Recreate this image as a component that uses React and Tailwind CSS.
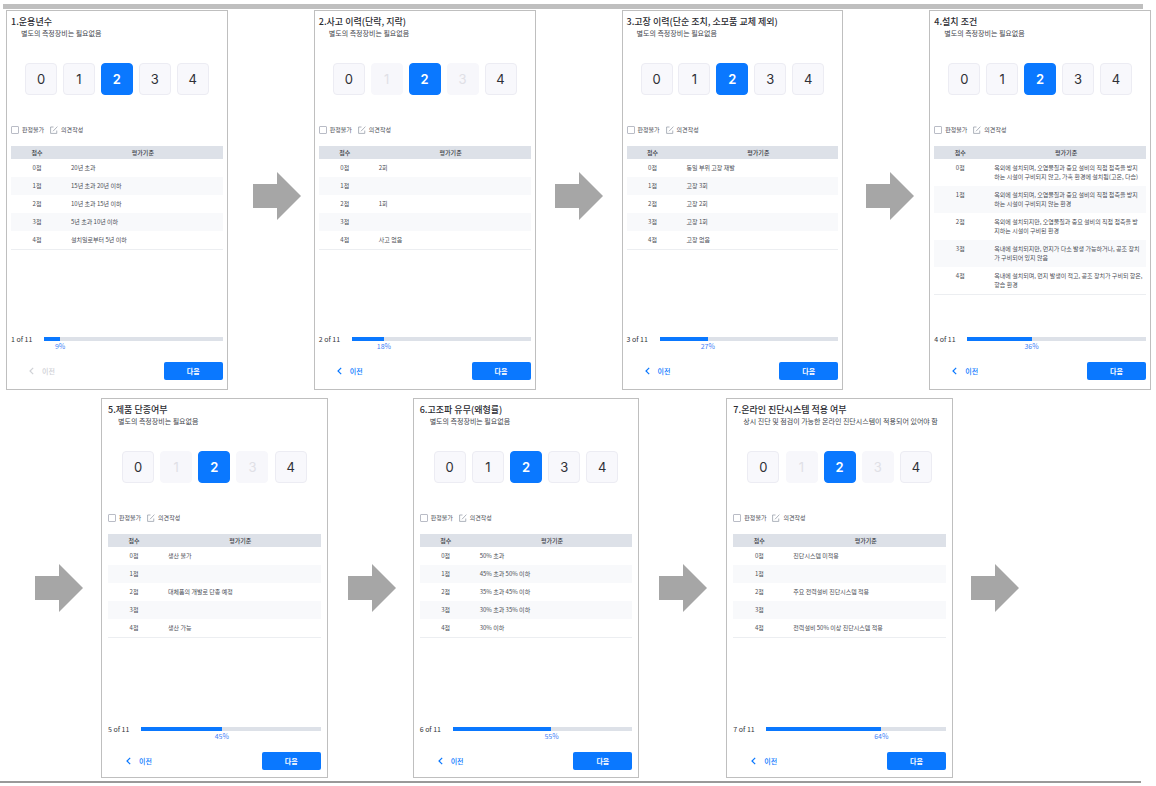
import clsx from "clsx";

const TOTAL = 11;
const NO_TOOL = "별도의 측정장비는 필요없음";

const firstRow = [
  {
    id: 1,
    title: "운용년수",
    note: NO_TOOL,
    criteria: ["20년 초과", "15년 초과 20년 이하", "10년 초과 15년 이하", "5년 초과 10년 이하", "설치일로부터 5년 이하"],
  },
  {
    id: 2,
    title: "사고 이력(단락, 지락)",
    note: NO_TOOL,
    criteria: ["2회", "", "1회", "", "사고 없음"],
  },
  {
    id: 3,
    title: "고장 이력(단순 조치, 소모품 교체 제외)",
    note: NO_TOOL,
    criteria: ["동일 부위 고장 재발", "고장 3회", "고장 2회", "고장 1회", "고장 없음"],
  },
  {
    id: 4,
    title: "설치 조건",
    note: NO_TOOL,
    criteria: [
      "옥외에 설치되며, 오염물질과 중요 설비의 직접 접촉을 방지\n하는 시설이 구비되지 않고, 가혹 환경에 설치됨(고온, 다습)",
      "옥외에 설치되며, 오염물질과 중요 설비의 직접 접촉을 방지\n하는 시설이 구비되지 않는 환경",
      "옥외에 설치되지만, 오염물질과 중요 설비의 직접 접촉을 방\n지하는 시설이 구비된 환경",
      "옥내에 설치되지만, 먼지가 다소 발생 가능하거나, 공조 장치\n가 구비되어 있지 않음",
      "옥내에 설치되며, 먼지 발생이 적고, 공조 장치가 구비되 항온,\n항습 환경",
    ],
  },
];

const secondRow = [
  {
    id: 5,
    title: "제품 단종여부",
    note: NO_TOOL,
    criteria: ["생산 불가", "", "대체품의 개발로 단종 예정", "", "생산 가능"],
  },
  {
    id: 6,
    title: "고조파 유무(왜형률)",
    note: NO_TOOL,
    criteria: ["50% 초과", "45% 초과 50% 이하", "35% 초과 45% 이하", "30% 초과 35% 이하", "30% 이하"],
  },
  {
    id: 7,
    title: "온라인 진단시스템 적용 여부",
    note: "상시 진단 및 점검이 가능한 온라인 진단시스템이 적용되어 있어야 함",
    criteria: ["진단시스템 미적용", "", "주요 전력설비 진단시스템 적용", "", "전력설비 50% 이상 진단시스템 적용"],
  },
];

function Arrow() {
  return (
    <svg aria-hidden="true" viewBox="0 0 48 48" className="size-12 shrink-0 fill-[#a6a6a6]">
      <path d="M0 12H24V0L48 24L24 48V36H0Z" />
    </svg>
  );
}

function NoteIcon() {
  return (
    <svg aria-hidden="true" viewBox="0 0 16 16" fill="none" stroke="currentColor" strokeWidth="1.4" className="size-2 text-[#8d93a0]">
      <path d="M7 2H1.2V14.8H13.5V9" />
      <path d="M6 10.5L14.8 1.2" />
    </svg>
  );
}

function BackIcon() {
  return (
    <svg aria-hidden="true" viewBox="0 0 5 8" fill="none" stroke="currentColor" strokeWidth="1.2" className="h-2 w-[5px]">
      <path d="M4.2 0.8L1 4L4.2 7.2" />
    </svg>
  );
}

function ScoreButton({ value, selected, disabled }) {
  return (
    <button
      type="button"
      aria-pressed={selected}
      disabled={disabled}
      className={clsx(
        "flex size-8 items-center justify-center rounded border font-[Inter,sans-serif] text-[13px] leading-none",
        selected && "border-[#0a78ff] bg-[#0a78ff] font-semibold text-white",
        !selected && !disabled && "border-[#ececf3] bg-[#f8f8fc] text-[#2f3036]",
        disabled && "border-[#f7f7fb] bg-[#f7f7fb] text-[#e0e0e6]"
      )}
    >
      {value}
    </button>
  );
}

function CriteriaTable({ criteria }) {
  return (
    <table className="w-full table-fixed border-collapse border-b border-[#eceef1] text-[6px] leading-[9px] text-[#4a4d55]">
      <thead>
        <tr className="h-[13px] bg-[#dde1e8] text-[#3a3d45]">
          <th scope="col" className="w-[52px] p-0 font-medium">점수</th>
          <th scope="col" className="p-0 font-medium">평가기준</th>
        </tr>
      </thead>
      <tbody>
        {criteria.map((text, score) => (
          <tr key={score} className="align-top even:bg-[#f8f9fb]">
            <td className="px-0 pt-1 pb-[5px] text-center">{score}점</td>
            <td className="pt-1 pr-0 pb-[5px] pl-2 whitespace-pre">{text}</td>
          </tr>
        ))}
      </tbody>
    </table>
  );
}

function Card({ item, wide }) {
  const percent = Math.round((item.id / TOTAL) * 100);
  const first = item.id === 1;
  return (
    <form
      className={clsx(
        "flex min-h-[380px] min-w-0 flex-1 flex-col border border-[#bfbfbf] bg-white pt-[5px]",
        wide ? "px-1.5 pb-[7px]" : "px-1 pb-[9px]"
      )}
    >
      <h2 className="text-[9px] leading-3 font-medium whitespace-nowrap text-[#2b2c32]">
        {item.id}.{item.title}
      </h2>
      <p className="pl-2.5 text-[7px] leading-[11px] whitespace-nowrap text-[#44464d]">{item.note}</p>

      <div className="mt-6 flex justify-between px-3.5">
        {item.criteria.map((text, score) => (
          <ScoreButton key={score} value={score} selected={score === 2} disabled={text === ""} />
        ))}
      </div>

      <div className="mt-[29px] mb-[11px] flex h-[11px] items-center text-[6px] text-[#4a4d55]">
        <label className="flex items-center gap-[3px]">
          <input type="checkbox" className="size-2 appearance-none rounded-[1px] border border-[#b9bcc6] bg-white" />
          판정불가
        </label>
        <button type="button" className="ml-1.5 flex items-center gap-[3px]">
          <NoteIcon />
          의견작성
        </button>
      </div>

      <CriteriaTable criteria={item.criteria} />

      <div className="mt-auto flex items-start">
        <span className="w-[33px] shrink-0 text-[7px] leading-[9px] whitespace-nowrap text-[#33353b]">
          {item.id} of {TOTAL}
        </span>
        <div className="flex-1 pt-0.5">
          <div role="progressbar" aria-label="진행률" aria-valuenow={percent} className="h-1 bg-[#dde1e8]">
            <div className="h-full bg-[#0a78ff]" style={{ width: `${percent}%` }} />
          </div>
          <div className="flex pt-px text-[7px] leading-[9px] text-[#3f82f7]">
            <span className="flex justify-end" style={{ width: `${percent}%` }}>
              <span className="flex w-0 shrink-0 justify-center">{percent}%</span>
            </span>
          </div>
        </div>
      </div>

      <div className="mt-[11px] flex items-center justify-between text-[7px]">
        <button
          type="button"
          disabled={first}
          className={clsx("flex items-center gap-2 pl-[18px] font-medium", first ? "text-[#cfd1d6]" : "text-[#0a78ff]")}
        >
          <BackIcon />
          이전
        </button>
        <button type="button" className="h-[18px] w-[59px] rounded-xs bg-[#0a78ff] font-bold text-white">
          다음
        </button>
      </div>
    </form>
  );
}

export default function App() {
  return (
    <main className="min-w-[1000px] bg-white pt-1 font-['Noto_Sans_CJK_KR',sans-serif]">
      <div className="mr-[13px] ml-[3px] h-[5px] bg-[#bfbfbf]" />

      <section className="mt-px flex items-center pr-[5px] pl-1.5">
        <Card item={firstRow[0]} />
        <div className="flex w-[86px] shrink-0 pb-2 pl-[25px]"><Arrow /></div>
        <Card item={firstRow[1]} />
        <div className="flex w-[86px] shrink-0 pb-2 pl-[19px]"><Arrow /></div>
        <Card item={firstRow[2]} />
        <div className="flex w-[86px] shrink-0 pb-2 pl-[23px]"><Arrow /></div>
        <Card item={firstRow[3]} />
      </section>

      <section className="mt-2 flex items-center pr-[137px] pl-[35px]">
        <div className="flex w-[66px] shrink-0"><Arrow /></div>
        <Card item={secondRow[0]} wide />
        <div className="flex w-[85px] shrink-0 pl-5"><Arrow /></div>
        <Card item={secondRow[1]} wide />
        <div className="flex w-[87px] shrink-0 pl-5"><Arrow /></div>
        <Card item={secondRow[2]} wide />
        <div className="flex shrink-0 pl-[18px]"><Arrow /></div>
      </section>

      <div className="mt-[3px] mr-[15px] h-0.5 bg-[#999999]" />
    </main>
  );
}
